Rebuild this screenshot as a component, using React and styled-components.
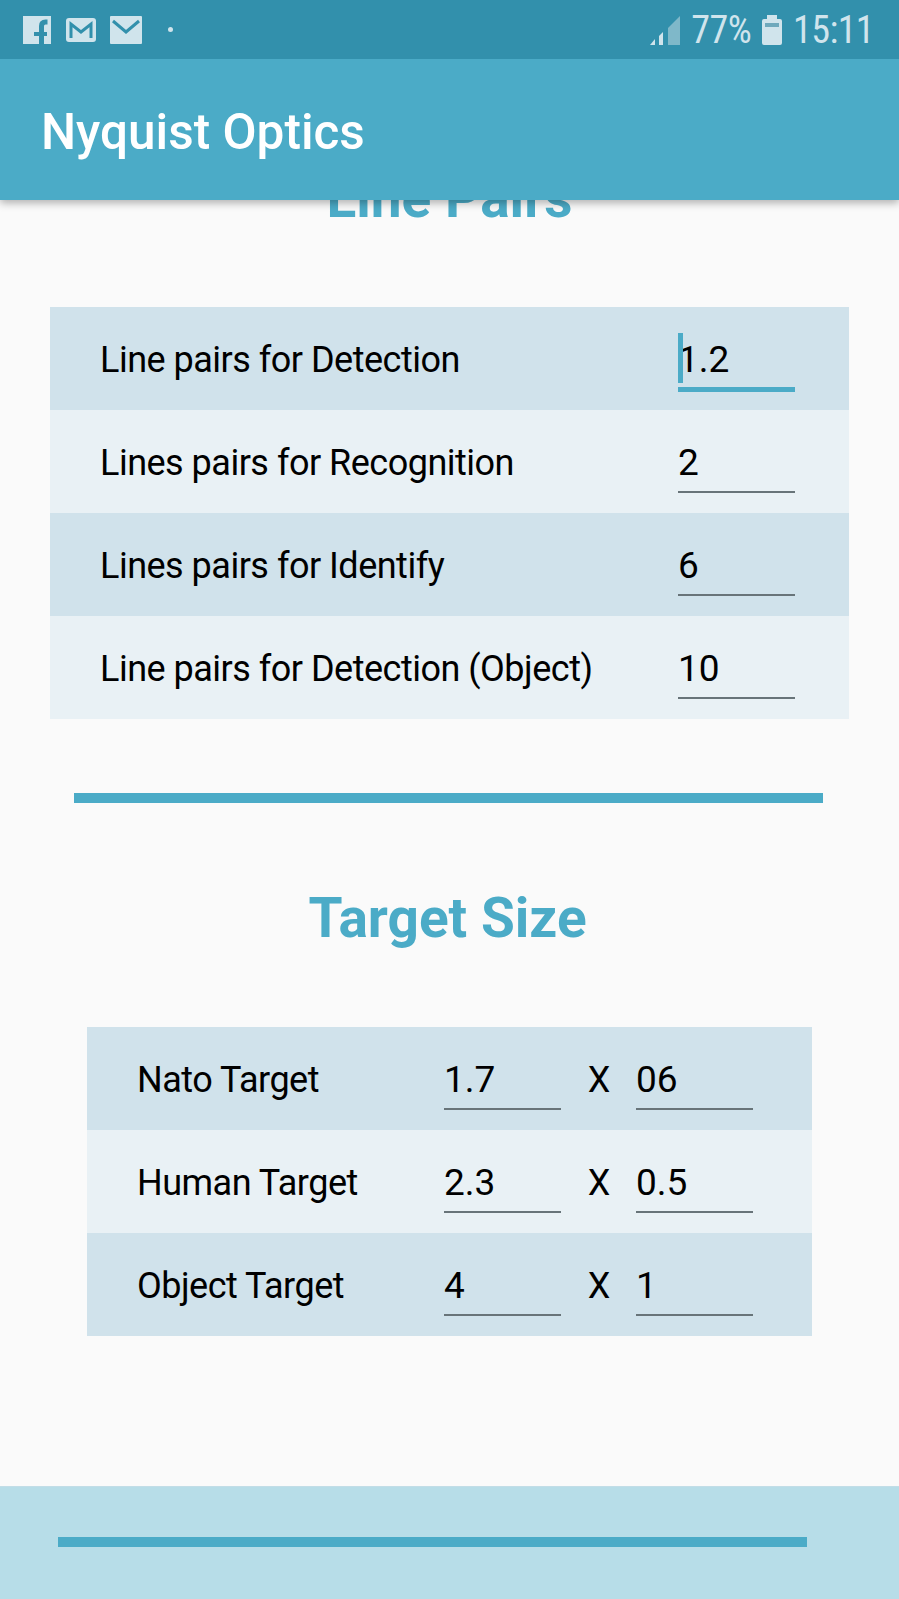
import styled, { createGlobalStyle } from "styled-components";

const lineRows = [
  { label: "Line pairs for Detection", value: "1.2", focused: true },
  { label: "Lines pairs for Recognition", value: "2" },
  { label: "Lines pairs for Identify", value: "6" },
  { label: "Line pairs for Detection (Object)", value: "10" },
];

const targetRows = [
  { label: "Nato Target", w: "1.7", h: "06" },
  { label: "Human Target", w: "2.3", h: "0.5" },
  { label: "Object Target", w: "4", h: "1" },
];

function App() {
  return (
    <>
      <GlobalStyle />
      <Page>
        <StatusBar>
          <StatusIcons>
            <svg width="30" height="30" viewBox="0 0 30 30">
              <rect x="1" y="1" width="28" height="28" fill="#d0e4ec" />
              <path d="M19.500 29V11c0-2.500 1.500-4 4-4h2" fill="none" stroke="#3290ac" strokeWidth="5" />
              <path d="M12 19h13" fill="none" stroke="#3290ac" strokeWidth="4" />
            </svg>
            <svg width="30" height="24" viewBox="0 0 30 24">
              <rect width="30" height="24" rx="3" fill="#d0e4ec" />
              <path d="M5 20V6l10 8 10-8v14" fill="none" stroke="#3290ac" strokeWidth="3" />
            </svg>
            <svg width="32" height="28" viewBox="0 0 32 28">
              <rect width="32" height="28" rx="1" fill="#d0e4ec" />
              <path d="M3 5l13 11L29 5" fill="none" stroke="#3290ac" strokeWidth="3" />
            </svg>
            <Dot />
          </StatusIcons>
          <StatusRight>
            <svg width="30" height="30" viewBox="0 0 30 30">
              <path d="M18 30V13L30 1v29z" fill="#7fb8c9" />
              <path d="M0 30l5-6v6z" fill="#d0e4ec" />
              <path d="M9 30v-9l4-4v13z" fill="#d0e4ec" />
            </svg>
            <StatusText>77%</StatusText>
            <svg width="20" height="30" viewBox="0 0 20 30">
              <path d="M5 0h10v4h3a2 2 0 0 1 2 2v22a2 2 0 0 1-2 2H2a2 2 0 0 1-2-2V6a2 2 0 0 1 2-2h3z" fill="#d0e4ec" />
              <rect x="3" y="8" width="14" height="4" fill="#6fa9bc" />
            </svg>
            <StatusText>15:11</StatusText>
          </StatusRight>
        </StatusBar>
        <AppBar>
          <AppTitle>Nyquist Optics</AppTitle>
        </AppBar>
        <Content>
          <SectionTitle $clipped>Line Pairs</SectionTitle>
          <LineTable>
            {lineRows.map((row) => (
              <Row key={row.label}>
                <Label>{row.label}</Label>
                <Field $focused={row.focused}>{row.value}</Field>
              </Row>
            ))}
          </LineTable>
          <Divider />
          <SectionTitle>Target Size</SectionTitle>
          <TargetTable>
            {targetRows.map((row) => (
              <TargetRow key={row.label}>
                <Label>{row.label}</Label>
                <Field>{row.w}</Field>
                <Times>X</Times>
                <Field>{row.h}</Field>
              </TargetRow>
            ))}
          </TargetTable>
        </Content>
        <Footer>
          <FooterBar />
        </Footer>
      </Page>
    </>
  );
}

const GlobalStyle = createGlobalStyle`
  html, body {
    margin: 0;
    padding: 0;
    background: #fafafa;
    font-family: Roboto, "Noto Sans", sans-serif;
  }
`;

const Page = styled.div`
  width: 899px;
  height: 1599px;
  display: flex;
  flex-direction: column;
  overflow: hidden;
  background: #fafafa;
`;

const StatusBar = styled.header`
  height: 59px;
  flex: none;
  display: flex;
  align-items: center;
  justify-content: space-between;
  padding: 0 25px 0 22px;
  background: #3290ac;
  position: relative;
  z-index: 2;
`;

const StatusIcons = styled.div`
  display: flex;
  align-items: center;
  gap: 14px;
`;

const Dot = styled.span`
  width: 5px;
  height: 5px;
  margin-left: 12px;
  border-radius: 50%;
  background: #d0e4ec;
`;

const StatusRight = styled.div`
  display: flex;
  align-items: center;
  gap: 11px;
`;

const StatusText = styled.span`
  font-size: 38px;
  font-weight: 400;
  font-stretch: 80%;
  letter-spacing: -0.6px;
  color: #d0e4ec;
`;

const AppBar = styled.div`
  height: 141px;
  flex: none;
  display: flex;
  align-items: center;
  padding: 5px 0 0 41px;
  box-sizing: border-box;
  background: #4babc7;
  box-shadow: 0 3px 8px rgba(0, 0, 0, 0.3);
  position: relative;
  z-index: 1;
`;

const AppTitle = styled.h1`
  margin: 0;
  font-size: 49.500px;
  font-weight: 500;
  color: #fff;
`;

const Content = styled.main`
  flex: 1;
  display: flex;
  flex-direction: column;
  align-items: center;
  margin-top: -32px;
`;

const SectionTitle = styled.h2`
  margin: ${(p) => (p.$clipped ? "0 0 79px" : "85px 4px 79px 0")};
  font-size: 55px;
  line-height: 60px;
  font-weight: 700;
  color: #4babc7;
`;

const LineTable = styled.div`
  width: 799px;
  display: flex;
  flex-direction: column;
`;

const TargetTable = styled.div`
  width: 725px;
  display: flex;
  flex-direction: column;
`;

const Row = styled.div`
  height: 103px;
  display: flex;
  align-items: center;
  justify-content: space-between;
  padding: 0 54px 0 50px;
  box-sizing: border-box;
  background: #e9f1f5;

  &:nth-child(odd) {
    background: #d0e2eb;
  }
`;

const TargetRow = styled(Row)`
  justify-content: flex-start;
  padding: 0 0 0 50px;

  & > span:first-child {
    width: 307px;
  }
`;

const Label = styled.span`
  padding-top: 2px;
  font-size: 36px;
  letter-spacing: -0.5px;
  color: #000;
`;

const Field = styled.div`
  width: 117px;
  height: ${(p) => (p.$focused ? "74px" : "72px")};
  align-self: flex-start;
  margin-top: 11px;
  box-sizing: border-box;
  position: relative;
  padding: 22px 0 0;
  font-size: 37px;
  line-height: 40px;
  color: #000;
  border-bottom: ${(p) => (p.$focused ? "5px solid #4babc7" : "2px solid #687479")};

  &::before {
    content: "";
    display: ${(p) => (p.$focused ? "block" : "none")};
    position: absolute;
    left: 0;
    top: 15px;
    width: 5px;
    height: 50px;
    background: #4babc7;
  }
`;

const Times = styled.span`
  width: 75px;
  padding: 2px 0 0 1px;
  box-sizing: border-box;
  text-align: center;
  font-size: 36px;
  color: #000;
`;

const Divider = styled.div`
  width: 749px;
  height: 10px;
  margin: 74px 3px 0 0;
  background: #4babc7;
`;

const Footer = styled.footer`
  height: 113px;
  flex: none;
  padding: 50px 0 0 58px;
  box-sizing: border-box;
  border-top: 1px solid #c2dde7;
  background: #b7dde8;
`;

const FooterBar = styled.div`
  width: 749px;
  height: 10px;
  background: #4babc7;
`;

export default App;
